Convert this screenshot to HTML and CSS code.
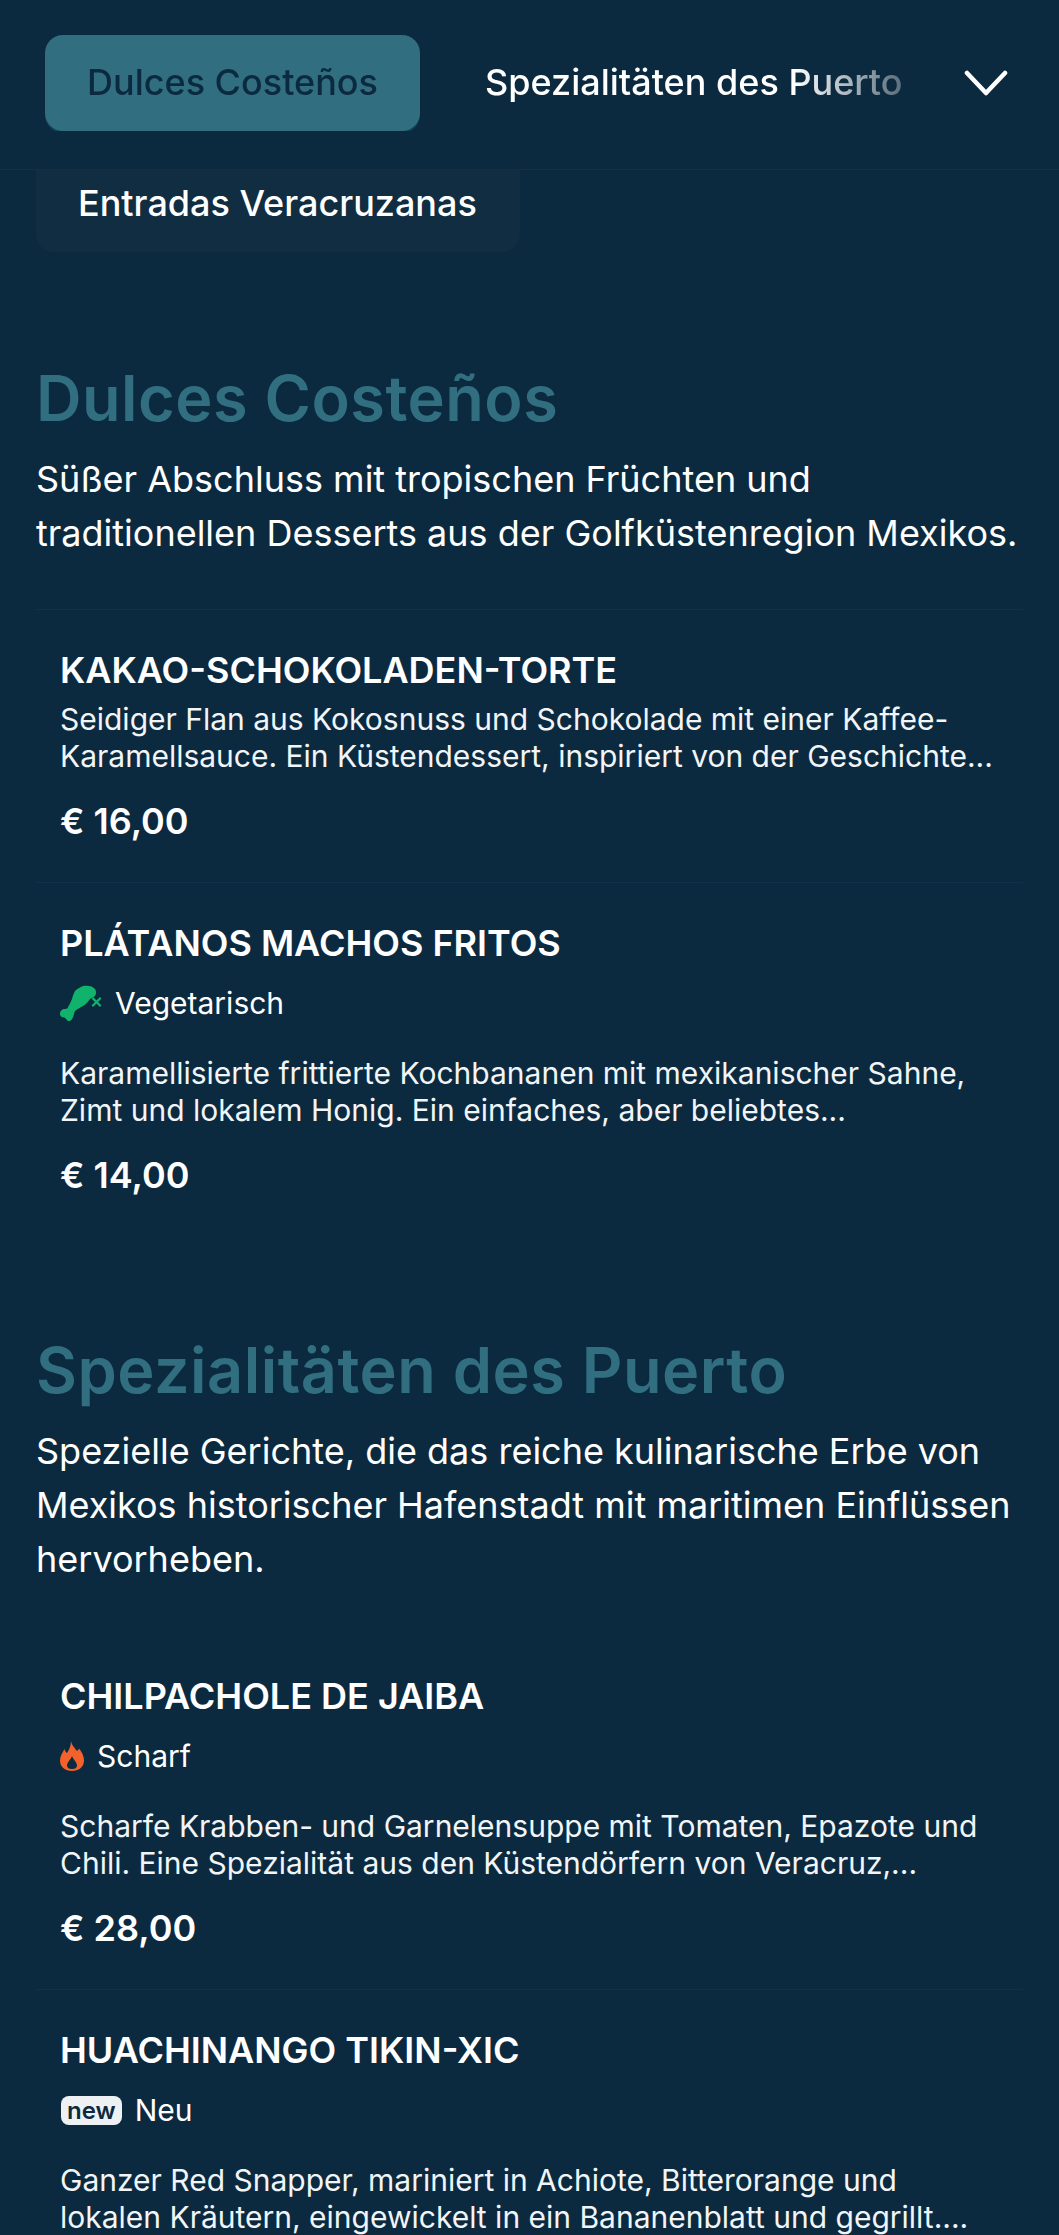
FILE: index.html
```html
<!DOCTYPE html>
<html lang="de">
<head>
    <meta charset="UTF-8">
    <meta name="viewport" content="width=device-width, initial-scale=1.0">
    <title>Speisekarte</title>
    <link rel="stylesheet" href="styles.css">
</head>
<body>
    <div class="menu-page">
        <!-- Category Nav -->
        <header class="category-nav">
            <div class="category-tabs">
                <a href="#dulces" class="category-tab active-tab">Dulces Costeños</a>
                <a href="#puerto" class="category-tab">Spezialitäten des Puerto</a>
            </div>
            <button class="nav-toggle" aria-label="Kategorien">
                <svg viewBox="0 0 44 26" width="44" height="26" fill="none" stroke="#fff" stroke-width="4.5" stroke-linecap="round" stroke-linejoin="round">
                    <polyline points="3,3 22,23 41,3"/>
                </svg>
            </button>
        </header>
        <div class="category-more">
            <a href="#entradas" class="category-tab more-tab">Entradas Veracruzanas</a>
        </div>

        <!-- Dulces Costeños -->
        <section class="menu-section" id="dulces">
            <h2 class="section-title">Dulces Costeños</h2>
            <p class="section-description">Süßer Abschluss mit tropischen Früchten und traditionellen Desserts aus der Golfküstenregion Mexikos.</p>

            <article class="menu-item">
                <h3 class="item-title">Kakao-Schokoladen-Torte</h3>
                <p class="item-description">Seidiger Flan aus Kokosnuss und Schokolade mit einer Kaffee-Karamellsauce. Ein Küstendessert, inspiriert von der Geschichte...</p>
                <div class="item-price">€ 16,00</div>
            </article>

            <article class="menu-item">
                <h3 class="item-title">Plátanos Machos Fritos</h3>
                <div class="item-tag">
                    <svg class="tag-icon" viewBox="0 0 42 36" width="42" height="36">
                        <path fill="#10b26c" d="M23 1C28 0 33 1 35 4 37 7 36 10 34 12 32 13 31 13 30 14 28 17 26 19 23 21 20 23 17 24 15 26 14 28 14 31 12 34 11 36 8 37 7 35 6 34 5 33 4 32 2 33 0 31 0 29 0 26 2 24 5 24 7 24 8 23 8 22 10 19 11 16 12 14 13 10 14 8 15 6 17 4 20 2 23 1Z"/>
                        <path fill="none" stroke="#10b26c" stroke-width="2.4" stroke-linecap="round" d="M33 13.5l7 7M40 13.5l-7 7"/>
                    </svg>
                    <span>Vegetarisch</span>
                </div>
                <p class="item-description">Karamellisierte frittierte Kochbananen mit mexikanischer Sahne, Zimt und lokalem Honig. Ein einfaches, aber beliebtes...</p>
                <div class="item-price">€ 14,00</div>
            </article>
        </section>

        <!-- Spezialitäten des Puerto -->
        <section class="menu-section" id="puerto">
            <h2 class="section-title">Spezialitäten des Puerto</h2>
            <p class="section-description">Spezielle Gerichte, die das reiche kulinarische Erbe von Mexikos historischer Hafenstadt mit maritimen Einflüssen hervorheben.</p>

            <article class="menu-item no-line">
                <h3 class="item-title">Chilpachole de Jaiba</h3>
                <div class="item-tag">
                    <svg class="tag-icon" viewBox="0 0 24 30" width="24" height="30">
                        <path fill="#f2622a" fill-rule="evenodd" d="M11 0C12 5 15 7 17 10 18 9.5 18.5 8.5 19 7.5 22 11 24 15 24 19.5 24 26 18.5 30 12 30 5.5 30 0 26 0 19.5 0 15 2.5 12 4.5 8 5 10 6 11.5 7 12 9 9 11 5 11 0ZM12 15C11 18.5 7 21 7 24.5 7 27 9 28 12 28 15 28 17 27 17 24.5 17 21 13 18.5 12 15Z"/>
                    </svg>
                    <span>Scharf</span>
                </div>
                <p class="item-description">Scharfe Krabben- und Garnelensuppe mit Tomaten, Epazote und Chili. Eine Spezialität aus den Küstendörfern von Veracruz,...</p>
                <div class="item-price">€ 28,00</div>
            </article>

            <article class="menu-item">
                <h3 class="item-title">Huachinango Tikin-Xic</h3>
                <div class="item-tag">
                    <span class="new-badge">new</span>
                    <span>Neu</span>
                </div>
                <p class="item-description">Ganzer Red Snapper, mariniert in Achiote, Bitterorange und lokalen Kräutern, eingewickelt in ein Bananenblatt und gegrillt....</p>
            </article>
        </section>
    </div>
</body>
</html>
```

FILE: styles.css
```css
* {
    margin: 0;
    padding: 0;
    box-sizing: border-box;
}

body {
    font-family: 'Inter', 'Liberation Sans', sans-serif;
    background: #0c2a3f;
    color: #ffffff;
}

.menu-page {
    height: 100vh;
    overflow: hidden;
}

.category-nav {
    position: relative;
    z-index: 2;
    display: flex;
    align-items: center;
    height: 170px;
    padding: 0 51px 4px 45px;
    background: #0c2a3f;
    border-bottom: 1px solid #12304a;
}

.category-tabs {
    flex: 1;
    display: flex;
    gap: 23px;
    overflow: hidden;
    -webkit-mask-image: linear-gradient(to right, #000 calc(100% - 110px), rgba(0, 0, 0, 0.3) 100%);
    mask-image: linear-gradient(to right, #000 calc(100% - 110px), rgba(0, 0, 0, 0.3) 100%);
}

.category-tab {
    flex-shrink: 0;
    display: block;
    height: 96px;
    line-height: 94px;
    padding: 0 42px;
    border-radius: 18px;
    font-size: 36px;
    font-weight: 500;
    color: #ffffff;
    white-space: nowrap;
    text-decoration: none;
}

.active-tab {
    background: #316e80;
    color: #0c2a3f;
    box-shadow: 0 2px 0 #0f4455;
}

.nav-toggle {
    display: flex;
    margin-left: 59px;
    background: none;
    border: none;
}

.category-more {
    margin-top: -14px;
    padding-left: 36px;
}

.more-tab {
    display: inline-block;
    width: 484px;
    background: #102d42;
}

.menu-section {
    padding: 0 36px;
}

#dulces {
    margin-top: 106px;
}

#puerto {
    margin-top: 94px;
}

.section-title {
    font-size: 63px;
    line-height: 80px;
    font-weight: 600;
    letter-spacing: 0.5px;
    color: #316e80;
}

.section-description {
    margin-top: 14px;
    margin-bottom: 49px;
    font-size: 36px;
    line-height: 54px;
}

.menu-item {
    padding: 38px 24px 39px;
    border-top: 1px solid #12304a;
}

.no-line {
    border-top-color: transparent;
}

.item-title {
    font-size: 36px;
    line-height: 44px;
    font-weight: 600;
    text-transform: uppercase;
}

.item-description {
    margin-top: 9px;
    font-size: 30px;
    line-height: 36.5px;
    color: #f2f5f7;
}

.item-price {
    margin-top: 25px;
    font-size: 36px;
    line-height: 44px;
    font-weight: 600;
}

.item-tag {
    display: flex;
    align-items: center;
    gap: 13px;
    height: 36px;
    margin-top: 20px;
    margin-bottom: 34px;
    font-size: 30px;
}

.tag-icon {
    flex-shrink: 0;
}

.new-badge {
    margin-left: 1px;
    padding: 0 6px;
    background: #eef1f4;
    border-radius: 8px;
    color: #0c2a3f;
    font-size: 24px;
    line-height: 29px;
    font-weight: 600;
}
```
